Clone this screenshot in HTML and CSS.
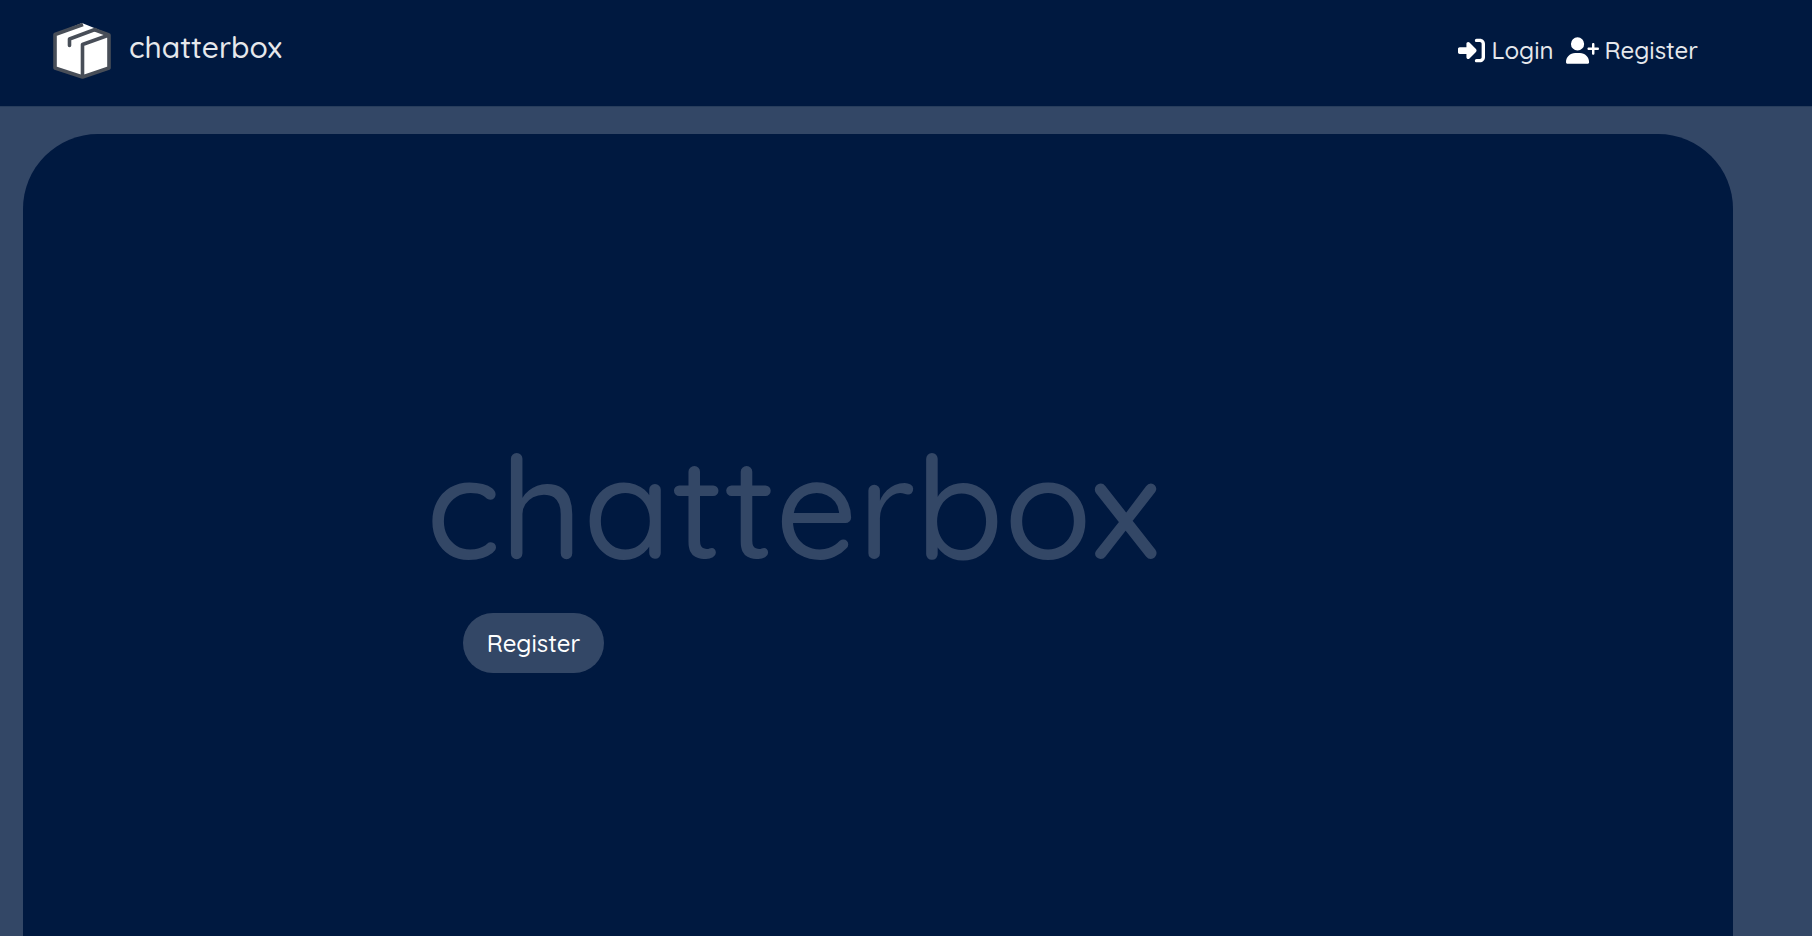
FILE: index.html
```html
<!DOCTYPE html>
<html lang="en">
<head>
  <meta charset="utf-8">
  <meta name="viewport" content="width=device-width, initial-scale=1">
  <title>chatterbox</title>
  <link rel="stylesheet" href="styles.css">
</head>
<body>
  <header class="navbar">
    <a class="brand" href="#">
      <svg class="brand-logo" viewBox="12 9 60 59" aria-hidden="true">
        <path fill="#fff" d="M42 11 69 22V56L42 65 15 56V22Z"/>
        <path fill="none" stroke="#484e58" stroke-width="3.6" stroke-linejoin="round" d="M43 12.500 15 22.500V56L42.500 65 69 56V23L42.500 32.500V65M69 23 54 17.500"/>
        <path fill="none" stroke="#484e58" stroke-width="3.6" stroke-linejoin="round" stroke-linecap="round" d="M29.500 33.500V27L55 17.500"/>
      </svg>
      <span class="brand-name">chatterbox</span>
    </a>
    <nav class="nav-links">
      <a class="nav-link" href="#login">
        <svg class="icon" viewBox="0 0 512 512" aria-hidden="true"><path d="M217.900 105.900L340.700 228.700c7.200 7.200 11.300 17.100 11.300 27.300s-4.100 20.100-11.300 27.300L217.900 406.100c-6.400 6.400-15 9.900-24 9.900c-18.700 0-33.900-15.200-33.900-33.900l0-62.100L32 320c-17.700 0-32-14.300-32-32l0-64c0-17.700 14.300-32 32-32l128 0 0-62.100c0-18.700 15.200-33.900 33.900-33.900c9 0 17.600 3.600 24 9.900zM352 416l64 0c17.700 0 32-14.300 32-32l0-256c0-17.700-14.300-32-32-32l-64 0c-17.700 0-32-14.300-32-32s14.300-32 32-32l64 0c53 0 96 43 96 96l0 256c0 53-43 96-96 96l-64 0c-17.700 0-32-14.300-32-32s14.300-32 32-32z"/></svg>
        <span>Login</span>
      </a>
      <a class="nav-link" href="#register">
        <svg class="icon icon-wide" viewBox="0 0 640 512" aria-hidden="true"><path d="M96 128a128 128 0 1 1 256 0A128 128 0 1 1 96 128zM0 482.300C0 383.800 79.800 304 178.300 304h91.400C368.200 304 448 383.800 448 482.300c0 16.400-13.300 29.700-29.700 29.700H29.700C13.300 512 0 498.700 0 482.300zM504 312V248H440c-13.300 0-24-10.700-24-24s10.700-24 24-24h64V136c0-13.300 10.700-24 24-24s24 10.700 24 24v64h64c13.300 0 24 10.700 24 24s-10.700 24-24 24H552v64c0 13.300-10.700 24-24 24s-24-10.700-24-24z"/></svg>
        <span>Register</span>
      </a>
    </nav>
  </header>
  <main class="panel">
    <div class="hero">
      <h1 class="hero-title">chatterbox</h1>
      <button class="hero-button" type="button">Register</button>
    </div>
  </main>
</body>
</html>
```
FILE: styles.css
```css
:root {
  --navy: #001940;
  --slate: #334766;
  --text: #e6e8ec;
}

* {
  box-sizing: border-box;
}

body {
  display: flex;
  flex-direction: column;
  min-height: 100vh;
  margin: 0;
  background: var(--slate);
  color: var(--text);
  font-family: Quicksand, Lato, sans-serif;
  font-weight: 500;
}

.navbar {
  display: flex;
  align-items: center;
  justify-content: space-between;
  padding: 21px 114px 26px 52px;
  background: var(--navy);
  border-bottom: 1px solid #273d5c;
}

.brand {
  display: flex;
  align-items: center;
  gap: 17px;
  color: inherit;
  text-decoration: none;
}

.brand-logo {
  width: 60px;
  height: 59px;
}

.brand-name {
  padding-bottom: 7px;
  font-size: 30px;
  line-height: 40px;
}

.nav-links {
  display: flex;
  gap: 12px;
}

.nav-link {
  display: flex;
  align-items: center;
  gap: 6px;
  color: inherit;
  font-size: 24px;
  line-height: 33px;
  text-decoration: none;
}

.icon {
  width: 27px;
  height: 27px;
  fill: #fff;
}

.icon-wide {
  width: 33px;
}

.panel {
  flex: 1;
  margin: 27px 79px 0 23px;
  padding: 281px 24px 0 calc(22% + 4px);
  background: var(--navy);
  border-radius: 75px 75px 0 0;
}

.hero {
  display: flex;
  flex-direction: column;
  align-items: flex-start;
}

.hero-title {
  margin: 0 0 18px;
  color: var(--slate);
  font-size: 144px;
  font-weight: 500;
  line-height: 180px;
}

.hero-button {
  margin-left: 37px;
  padding: 14px 24px;
  border: 0;
  border-radius: 30px;
  background: var(--slate);
  color: #fff;
  font: inherit;
  font-size: 24px;
  line-height: 32px;
}
```
